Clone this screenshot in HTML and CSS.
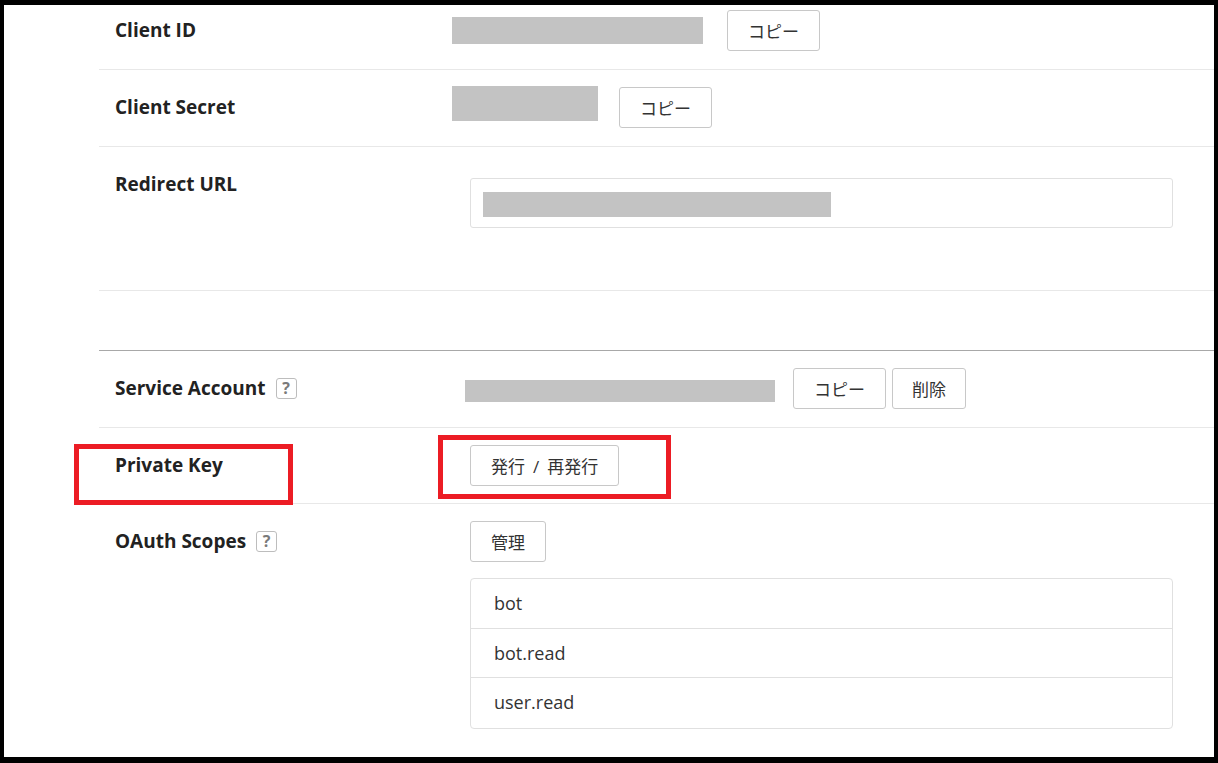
FILE: index.html
```html
<!DOCTYPE html>
<html lang="ja">

<head>
  <meta charset="UTF-8">
  <meta name="viewport" content="width=device-width, initial-scale=1.0">
  <title>Developer Console - App Settings</title>
  <link rel="stylesheet" href="styles.css">
</head>

<body>
  <div class="frame">
    <div class="panel">

      <div class="row first">
        <div class="label">Client ID</div>
        <div class="value">
          <div class="redacted redacted-id"></div>
          <button class="btn btn-copy-id">コピー</button>
        </div>
      </div>

      <div class="row">
        <div class="label">Client Secret</div>
        <div class="value">
          <div class="redacted redacted-secret"></div>
          <button class="btn btn-copy-secret">コピー</button>
        </div>
      </div>

      <div class="row">
        <div class="label">Redirect URL</div>
        <div class="value">
          <div class="field">
            <div class="redacted redacted-url"></div>
          </div>
        </div>
      </div>

      <div class="spacer"></div>

      <div class="row">
        <div class="label">Service Account <span class="help">?</span></div>
        <div class="value">
          <div class="redacted redacted-account"></div>
          <button class="btn btn-copy-account">コピー</button>
          <button class="btn btn-delete">削除</button>
        </div>
      </div>

      <div class="row key-row">
        <div class="label">Private Key</div>
        <div class="value">
          <button class="btn btn-indent">発行<span class="slash">/</span>再発行</button>
        </div>
      </div>

      <div class="row last">
        <div class="label">OAuth Scopes <span class="help">?</span></div>
        <div class="value stacked">
          <button class="btn btn-indent">管理</button>
          <ul class="scope-list">
            <li>bot</li>
            <li>bot.read</li>
            <li>user.read</li>
          </ul>
        </div>
      </div>

    </div>

    <!-- annotation marks -->
    <div class="mark mark-label"></div>
    <div class="mark mark-button"></div>
  </div>
</body>

</html>
```

FILE: styles.css
```css
:root {
  --text: #262626;
  --line: #e8e8e8;
  --border: #c8c8c8;
  --redact: #c3c3c3;
  --mark: #ec1c24;
}

* {
  margin: 0;
  padding: 0;
  box-sizing: border-box;
}

body {
  font-family: 'Open Sans', 'Noto Sans CJK JP', sans-serif;
  color: var(--text);
  background: #000;
}

.frame {
  position: relative;
  width: 1218px;
  height: 763px;
  border-style: solid;
  border-color: #000;
  border-width: 5px 4px 6px 4px;
  background: #fff;
  overflow: hidden;
}

.panel {
  margin-left: 95px;
}

.row {
  display: grid;
  grid-template-columns: 353px 1fr;
  padding: 17px 0 18px;
  border-bottom: 1px solid var(--line);
}

.row.first {
  padding-top: 5px;
}

.row.key-row {
  padding-bottom: 17px;
}

.row.last {
  border-bottom: none;
}

.label {
  display: flex;
  align-items: center;
  height: 40px;
  padding-left: 16px;
  font-size: 19px;
  font-weight: 700;
  color: #222;
}

.help {
  display: inline-flex;
  align-items: center;
  justify-content: center;
  width: 21px;
  height: 21px;
  margin-left: 10px;
  border: 1.5px solid #bdbdbd;
  border-radius: 3px;
  font-size: 16px;
  font-weight: 700;
  color: #7a7a7a;
}

.value {
  display: flex;
  align-items: flex-start;
}

.value.stacked {
  flex-direction: column;
}

.btn {
  height: 41px;
  padding: 0 20px;
  background: #fff;
  border: 1px solid var(--border);
  border-radius: 3px;
  font-family: 'Open Sans', 'Noto Sans CJK JP', sans-serif;
  font-size: 17px;
  color: #333;
  cursor: pointer;
  white-space: nowrap;
}

.btn .slash {
  margin: 0 8px;
}

.btn-indent {
  margin-left: 18px;
}

.btn-copy-id {
  margin-left: 24px;
}

.btn-copy-secret {
  margin-left: 21px;
}

.btn-copy-account {
  margin-left: 18px;
}

.btn-delete {
  margin-left: 6px;
  padding: 0 19px;
}

.redacted {
  background: var(--redact);
}

.redacted-id {
  width: 251px;
  height: 27px;
  margin-top: 7px;
}

.redacted-secret {
  width: 146px;
  height: 35px;
  margin-top: -1px;
}

.redacted-account {
  width: 310px;
  height: 22px;
  margin: 12px 0 0 13px;
}

.field {
  width: 703px;
  height: 50px;
  margin: 14px 0 44px 18px;
  padding: 13px 12px;
  border: 1px solid #e0e0e0;
  border-radius: 3px;
}

.redacted-url {
  width: 348px;
  height: 25px;
}

.spacer {
  height: 60px;
  border-bottom: 1px solid #a8a8a8;
}

.scope-list {
  list-style: none;
  width: 703px;
  margin: 16px 0 0 18px;
  border: 1px solid #e0e0e0;
  border-radius: 4px;
}

.scope-list li {
  height: 49.5px;
  padding-left: 23px;
  font-size: 18px;
  line-height: 48px;
  color: #333;
  border-bottom: 1px solid #e0e0e0;
}

.scope-list li:last-child {
  border-bottom: none;
}

/* red annotation boxes drawn over the screenshot */
.mark {
  position: absolute;
  border: 5px solid var(--mark);
}

.mark-label {
  left: 70px;
  top: 439px;
  width: 219px;
  height: 61px;
}

.mark-button {
  left: 434px;
  top: 430px;
  width: 233px;
  height: 64px;
}
```
